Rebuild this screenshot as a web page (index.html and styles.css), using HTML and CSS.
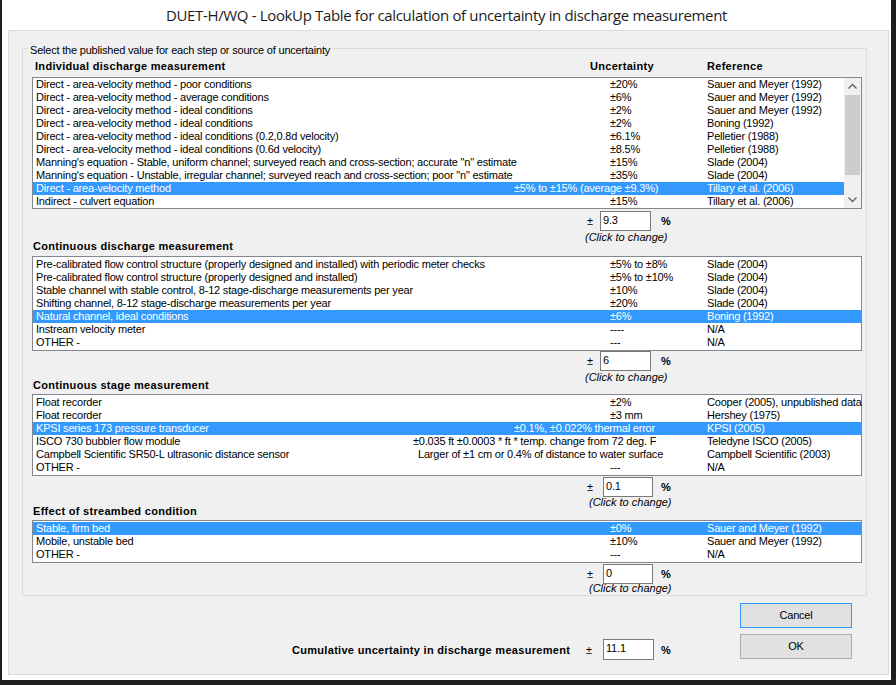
FILE: index.html
```html
<!DOCTYPE html>
<html>
<head>
<meta charset="utf-8">
<title>DUET-H/WQ - LookUp Table</title>
<link rel="stylesheet" href="styles.css">
</head>
<body>
<div class="window">
  <div class="titlebar">DUET-H/WQ - LookUp Table for calculation of uncertainty in discharge measurement</div>
  <div class="client">
    <div class="group">
      <div class="legend">Select the published value for each step or source of uncertainty</div>

      <div class="hdr">
        <span class="first">Individual discharge measurement</span><span>Uncertainty</span><span>Reference</span>
      </div>
      <div class="list l1">
        <div class="rows">
          <div class="row"><span>Direct - area-velocity method - poor conditions</span><span>±20%</span><span>Sauer and Meyer (1992)</span></div>
          <div class="row"><span>Direct - area-velocity method - average conditions</span><span>±6%</span><span>Sauer and Meyer (1992)</span></div>
          <div class="row"><span>Direct - area-velocity method - ideal conditions</span><span>±2%</span><span>Sauer and Meyer (1992)</span></div>
          <div class="row"><span>Direct - area-velocity method - ideal conditions</span><span>±2%</span><span>Boning (1992)</span></div>
          <div class="row"><span>Direct - area-velocity method - ideal conditions (0.2,0.8d velocity)</span><span>±6.1%</span><span>Pelletier (1988)</span></div>
          <div class="row"><span>Direct - area-velocity method - ideal conditions (0.6d velocity)</span><span>±8.5%</span><span>Pelletier (1988)</span></div>
          <div class="row"><span>Manning's equation - Stable, uniform channel; surveyed reach and cross-section; accurate "n" estimate</span><span>±15%</span><span>Slade (2004)</span></div>
          <div class="row"><span>Manning's equation - Unstable, irregular channel; surveyed reach and cross-section; poor "n" estimate</span><span>±35%</span><span>Slade (2004)</span></div>
          <div class="row sel"><span>Direct - area-velocity method</span><span class="w96">±5% to ±15% (average ±9.3%)</span><span>Tillary et al. (2006)</span></div>
          <div class="row"><span>Indirect - culvert equation</span><span>±15%</span><span>Tillary et al. (2006)</span></div>
        </div>
        <div class="vscroll">
          <div class="arrow"><svg width="17" height="17" viewBox="0 0 17 17"><path d="M4.5 10.5 L8.5 6.5 L12.5 10.5" fill="none" stroke="#606060" stroke-width="1.3"/></svg></div>
          <div class="track"><div class="thumb"></div></div>
          <div class="arrow"><svg width="17" height="17" viewBox="0 0 17 17"><path d="M4.5 6.5 L8.5 10.5 L12.5 6.5" fill="none" stroke="#606060" stroke-width="1.3"/></svg></div>
        </div>
      </div>
      <div class="val v1"><span class="pm">±</span><div class="box">9.3</div><span class="pct">%</span></div>
      <div class="click">(Click to change)</div>

      <div class="sec s2">Continuous discharge measurement</div>
      <div class="list l2">
        <div class="row"><span>Pre-calibrated flow control structure (properly designed and installed) with periodic meter checks</span><span>±5% to ±8%</span><span>Slade (2004)</span></div>
        <div class="row"><span>Pre-calibrated flow control structure (properly designed and installed)</span><span>±5% to ±10%</span><span>Slade (2004)</span></div>
        <div class="row"><span>Stable channel with stable control, 8-12 stage-discharge measurements per year</span><span>±10%</span><span>Slade (2004)</span></div>
        <div class="row"><span>Shifting channel, 8-12 stage-discharge measurements per year</span><span>±20%</span><span>Slade (2004)</span></div>
        <div class="row sel"><span>Natural channel, ideal conditions</span><span>±6%</span><span>Boning (1992)</span></div>
        <div class="row"><span>Instream velocity meter</span><span>----</span><span>N/A</span></div>
        <div class="row"><span>OTHER -</span><span>---</span><span>N/A</span></div>
      </div>
      <div class="val"><span class="pm">±</span><div class="box">6</div><span class="pct">%</span></div>
      <div class="click">(Click to change)</div>

      <div class="sec s3">Continuous stage measurement</div>
      <div class="list l3">
        <div class="row"><span>Float recorder</span><span>±2%</span><span>Cooper (2005), unpublished data</span></div>
        <div class="row"><span>Float recorder</span><span>±3 mm</span><span>Hershey (1975)</span></div>
        <div class="row sel"><span>KPSI series 173 pressure transducer</span><span class="w96">±0.1%, ±0.022% thermal error</span><span>KPSI (2005)</span></div>
        <div class="row"><span>ISCO 730 bubbler flow module</span><span class="w197">±0.035 ft ±0.0003 * ft * temp. change from 72 deg. F</span><span>Teledyne ISCO (2005)</span></div>
        <div class="row"><span>Campbell Scientific SR50-L ultrasonic distance sensor</span><span class="w192">Larger of ±1 cm or 0.4% of distance to water surface</span><span>Campbell Scientific (2003)</span></div>
        <div class="row"><span>OTHER -</span><span>---</span><span>N/A</span></div>
      </div>
      <div class="val alt v3"><span class="pm">±</span><div class="box">0.1</div><span class="pct">%</span></div>
      <div class="click alt c3">(Click to change)</div>

      <div class="sec s4">Effect of streambed condition</div>
      <div class="list l4">
        <div class="row sel"><span>Stable, firm bed</span><span>±0%</span><span>Sauer and Meyer (1992)</span></div>
        <div class="row"><span>Mobile, unstable bed</span><span>±10%</span><span>Sauer and Meyer (1992)</span></div>
        <div class="row"><span>OTHER -</span><span>---</span><span>N/A</span></div>
      </div>
      <div class="val alt v4"><span class="pm">±</span><div class="box">0</div><span class="pct">%</span></div>
      <div class="click alt c4">(Click to change)</div>
    </div>

    <div class="bottom">
      <div class="cum">
        <span class="cum-label">Cumulative uncertainty in discharge measurement</span>
        <span class="pm">±</span>
        <div class="box">11.1</div>
        <span class="pct">%</span>
      </div>
      <div class="buttons">
        <div class="btn def">Cancel</div>
        <div class="btn">OK</div>
      </div>
    </div>
  </div>
</div>
</body>
</html>
```
FILE: styles.css
```css
* { box-sizing: border-box; }
html, body { margin: 0; padding: 0; }
body {
  background: #1e1e1e;
  width: 896px;
  height: 685px;
  overflow: hidden;
  font-family: "Liberation Sans", Arial, sans-serif;
  font-size: 11px;
  color: #000;
}
.window {
  margin-left: 2px;
  width: 889px;
  height: 680px;
  background: #fff;
}
.titlebar {
  height: 30px;
  line-height: 30px;
  text-align: center;
  font-family: "Open Sans", "Noto Sans", sans-serif;
  font-size: 15px;
  letter-spacing: -0.35px;
  color: #1c1c1c;
  white-space: nowrap;
}
.client {
  margin-left: 6px;
  width: 881px;
  height: 645px;
  border: 1px solid #dadada;
  background: #f0f0f0;
  padding-top: 17px;
}
.group {
  margin-left: 13px;
  width: 845px;
  border: 1px solid #dcdcdc;
  padding: 0 4px 0 9px;
}
.legend {
  margin: -5px 0 0 -4px;
  padding: 0 2px;
  width: max-content;
  background: #f0f0f0;
  line-height: 13px;
  letter-spacing: -0.2px;
}
.hdr {
  display: grid;
  grid-template-columns: 558px 117px 1fr;
  margin-top: 3px;
  line-height: 13px;
  font-weight: bold;
  letter-spacing: 0.3px;
}
.hdr .first { padding-left: 3px; }
.sec {
  line-height: 13px;
  font-weight: bold;
  letter-spacing: 0.3px;
  padding-left: 1px;
}
.s2 { margin-top: -4px; }
.s3 { margin-top: -5px; }
.s4 { margin-top: -4px; }

.list {
  background: #fff;
  border: 1px solid #828790;
  padding: 1px 0;
}
.l1 { display: flex; padding: 0; margin-top: 4px; }
.l2 { margin-top: 3px; }
.l3 { margin-top: 2px; }
.l4 { margin-top: 2px; }
.rows { flex: 1; }
.row {
  display: grid;
  grid-template-columns: 574px 97px 1fr;
  height: 13px;
  line-height: 13px;
  padding-left: 3px;
  white-space: nowrap;
  letter-spacing: -0.2px;
}
.row.sel { background: #3399ff; color: #fff; }
.w96 { margin-left: -96px; }
.w197 { margin-left: -197px; }
.w192 { margin-left: -192px; }

.vscroll {
  width: 17px;
  background: #f0f0f0;
  display: flex;
  flex-direction: column;
}
.arrow { height: 17px; }
.arrow svg { display: block; }
.track { flex: 1; padding: 0 1px; }
.thumb { height: 80px; background: #cdcdcd; }

.val {
  display: flex;
  align-items: center;
  height: 20px;
  padding-left: 555px;
}
.val .pm { width: 13px; }
.val .box { width: 51px; }
.val .pct { margin-left: 10px; }
.val.alt .pm { width: 16px; }
.val.alt .box { width: 50px; }
.val.alt .pct { margin-left: 8px; }
.v1 { margin-top: 2px; }
.v3 { margin-top: 1px; }
.v4 { margin-top: 1px; }
.box {
  height: 20px;
  border: 1px solid #7a7a7a;
  background: #fff;
  padding: 2px 0 0 2px;
  line-height: 13px;
  letter-spacing: -0.2px;
}
.pct { font-weight: bold; }
.click {
  font-style: italic;
  line-height: 13px;
  padding-left: 553px;
}
.click.alt { padding-left: 557px; }
.c3 { margin-top: -1px; }
.c4 { margin-top: -2px; }

.bottom {
  display: flex;
  height: 78px;
  padding: 0 36px 0 283px;
}
.cum {
  display: flex;
  align-items: center;
  height: 21px;
  margin-top: 43px;
}
.cum-label {
  width: 294px;
  font-weight: bold;
  letter-spacing: 0.3px;
  white-space: nowrap;
}
.cum .pm { width: 17px; }
.cum .box { width: 51px; height: 21px; }
.cum .pct { margin-left: 7px; }
.buttons {
  margin-left: auto;
  margin-top: 7px;
  display: flex;
  flex-direction: column;
  gap: 6px;
}
.btn {
  width: 112px;
  height: 25px;
  line-height: 23px;
  text-align: center;
  border: 1px solid #adadad;
  background: #e1e1e1;
  letter-spacing: -0.2px;
}
.btn.def { border-color: #3399ff; }
```
